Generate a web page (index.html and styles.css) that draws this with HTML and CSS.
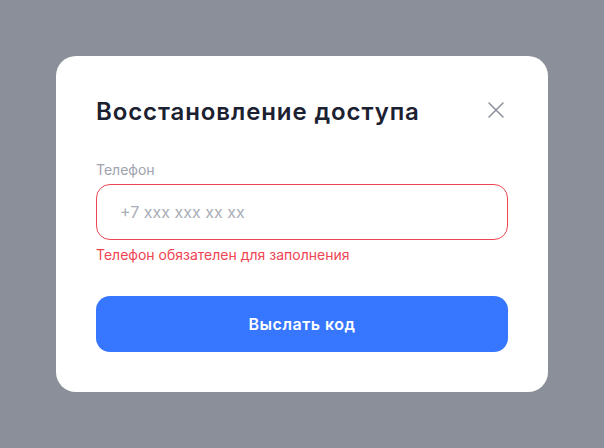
FILE: index.html
```html
<!DOCTYPE html>
<html lang="ru">
<head>
<meta charset="utf-8">
<link rel="stylesheet" href="styles.css">
</head>
<body>
<div class="overlay">
  <div class="modal">
    <div class="header">
      <h1 class="title">Восстановление доступа</h1>
      <button class="close" aria-label="Закрыть">
        <svg width="16" height="16" viewBox="0 0 16 16"><path d="M1 1L15 15M15 1L1 15" stroke="#8a8f99" stroke-width="1.5" stroke-linecap="round"/></svg>
      </button>
    </div>
    <div class="field">
      <label class="label">Телефон</label>
      <div class="input">+7 xxx xxx xx xx</div>
      <div class="error">Телефон обязателен для заполнения</div>
    </div>
    <button class="submit">Выслать код</button>
  </div>
</div>
</body>
</html>
```
FILE: styles.css
```css
* { box-sizing: border-box; }
html, body { margin: 0; padding: 0; }
body {
  width: 604px;
  height: 448px;
  background: #8a8f99;
  font-family: Inter, "Noto Sans", sans-serif;
}
.overlay {
  height: 448px;
  display: flex;
  align-items: center;
  justify-content: center;
}
.modal {
  width: 492px;
  height: 336px;
  background: #fff;
  border-radius: 20px;
  padding: 40px 40px 0 40px;
}
.header {
  display: flex;
  justify-content: space-between;
  align-items: center;
  height: 32px;
}
.title {
  margin: 0;
  font-size: 24px;
  line-height: 32px;
  font-weight: 600;
  color: #1b2130;
  letter-spacing: 0.9px;
}
.close {
  border: 0;
  background: none;
  padding: 0;
  width: 16px;
  height: 16px;
  margin-right: 4px;
  margin-top: -4px;
  display: flex;
}
.field {
  margin-top: 33px;
  display: flex;
  flex-direction: column;
}
.label {
  font-size: 14px;
  line-height: 17px;
  color: #9ea3ae;
}
.input {
  margin-top: 6px;
  height: 56px;
  border: 1px solid #ef4452;
  border-radius: 14px;
  padding: 0 23px;
  display: flex;
  align-items: center;
  font-size: 16px;
  color: #a9adb7;
}
.error {
  margin-top: 6px;
  font-size: 14px;
  line-height: 17px;
  color: #ef4452;
}
.submit {
  margin-top: 33px;
  width: 100%;
  height: 56px;
  border: 0;
  border-radius: 14px;
  background: #3777ff;
  color: #fff;
  font-family: Inter, sans-serif;
  font-size: 16px;
  font-weight: 600;
  letter-spacing: 0.5px;
}
```
